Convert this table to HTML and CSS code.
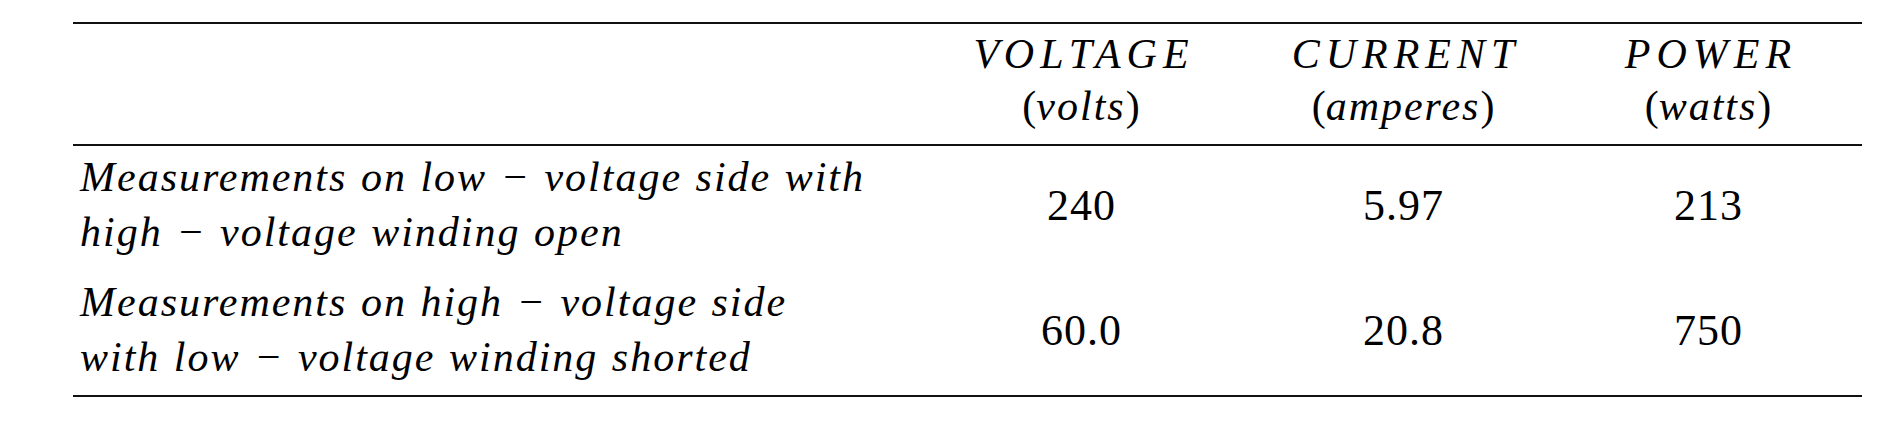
FILE: index.html
```html
<!DOCTYPE html>
<html>
<head>
<meta charset="utf-8">
<link rel="stylesheet" href="styles.css">
</head>
<body>
<div class="page">
  <div class="table">
    <div class="row head">
      <div class="cell label"></div>
      <div class="cell num"><span class="it caps">VOLTAGE</span><span class="unit">(<span class="it">volts</span>)</span></div>
      <div class="cell num"><span class="it caps">CURRENT</span><span class="unit">(<span class="it">amperes</span>)</span></div>
      <div class="cell num"><span class="it caps">POWER</span><span class="unit">(<span class="it">watts</span>)</span></div>
    </div>
    <div class="row body first">
      <div class="cell label"><span class="it">Measurements on low − voltage side with</span><span class="it">high − voltage winding open</span></div>
      <div class="cell num"><span class="digits">240</span></div>
      <div class="cell num"><span class="digits">5.97</span></div>
      <div class="cell num"><span class="digits">213</span></div>
    </div>
    <div class="row body last">
      <div class="cell label"><span class="it">Measurements on high − voltage side</span><span class="it">with low − voltage winding shorted</span></div>
      <div class="cell num"><span class="digits">60.0</span></div>
      <div class="cell num"><span class="digits">20.8</span></div>
      <div class="cell num"><span class="digits">750</span></div>
    </div>
  </div>
</div>
</body>
</html>
```
FILE: styles.css
```css
html, body {
  margin: 0;
  padding: 0;
  background: #ffffff;
}
body {
  font-family: "Liberation Serif", "Times New Roman", serif;
  color: #000000;
  font-size: 42px;
}
.page {
  padding: 22px 0 0 73px;
}
.table {
  width: 1789px;
  border-top: 2px solid #111;
  border-bottom: 2px solid #111;
}
.row {
  display: grid;
  grid-template-columns: 837px 342px 302px 308px;
  align-items: center;
}
.row.head {
  padding: 4px 0 12px;
  border-bottom: 2px solid #111;
}
.row.head .cell {
  line-height: 52px;
}
.row.body {
  padding: 4px 0 11px;
}
.row.body.last {
  padding-bottom: 10px;
}
.cell {
  display: flex;
  flex-direction: column;
  line-height: 55px;
}
.cell.label {
  padding-left: 7px;
  align-items: flex-start;
}
.cell.num {
  align-items: center;
}
.it {
  font-style: italic;
  letter-spacing: 2px;
  white-space: pre;
  word-spacing: 1px;
}
.it.caps {
  letter-spacing: 6px;
  margin-right: -6px;
}
.unit {
  white-space: pre;
}
.digits {
  font-size: 44px;
  letter-spacing: 1px;
  margin-right: -1px;
}
```
